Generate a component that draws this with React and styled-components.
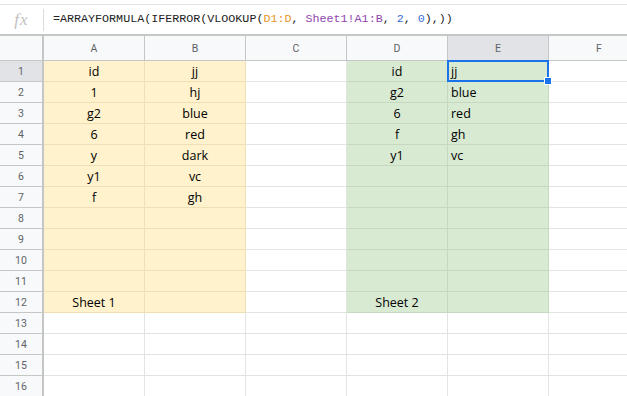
import styled, { createGlobalStyle } from "styled-components";

const GlobalStyle = createGlobalStyle`
  html, body {
    margin: 0;
    padding: 0;
    background: #fff;
    overflow: hidden;
  }
`;

const columns = ["A", "B", "C", "D", "E", "F"];

const fills = {
  yellow: { bg: "#fff2cc", line: "#efdfb5" },
  green: { bg: "#d9ead3", line: "#c6d8c0" },
  none: { bg: "#ffffff", line: "#e2e3e3" },
};

const sheet1 = [
  ["id", "jj"],
  ["1", "hj"],
  ["g2", "blue"],
  ["6", "red"],
  ["y", "dark"],
  ["y1", "vc"],
  ["f", "gh"],
];

const sheet2 = [
  ["id", "jj"],
  ["g2", "blue"],
  ["6", "red"],
  ["f", "gh"],
  ["y1", "vc"],
];

const Page = styled.div`
  width: 627px;
  height: 396px;
  overflow: hidden;
  background: #fff;
  font-family: "Open Sans", "Liberation Sans", sans-serif;
`;

const FormulaBar = styled.div`
  margin-top: 4px;
  height: 29px;
  border-top: 1px solid #e3e3e3;
  border-bottom: 2px solid #c4c7c5;
  display: flex;
  align-items: center;
`;

const FxBox = styled.div`
  width: 43px;
  height: 22px;
  border-right: 1px solid #dadce0;
  display: flex;
  align-items: center;
  justify-content: center;
  font-family: "Liberation Serif", "DejaVu Serif", serif;
  font-style: italic;
  font-size: 17px;
  color: #c2c2c2;
  letter-spacing: 1px;
`;

const Formula = styled.div`
  padding-left: 9px;
  font-family: "Liberation Mono", "DejaVu Sans Mono", monospace;
  font-size: 11.7px;
  color: #222;
  white-space: nowrap;
  padding-bottom: 2px;
`;

const Tok = styled.span`
  color: ${(p) => p.$c};
`;

const Grid = styled.div`
  display: grid;
  grid-template-columns: 44px repeat(6, 101px);
  grid-template-rows: 25px;
  grid-auto-rows: 21px;
`;

const Corner = styled.div`
  background: #f8f9fa;
  border-right: 2px solid #c4c7c5;
  border-bottom: 1px solid #c4c7c5;
`;

const ColHead = styled.div`
  background: ${(p) => (p.$active ? "#e1e3e6" : "#f8f9fa")};
  border-right: 1px solid #c4c7c5;
  border-bottom: 1px solid #c4c7c5;
  display: flex;
  align-items: center;
  justify-content: center;
  font-family: "Roboto", "Liberation Sans", sans-serif;
  font-size: 10.5px;
  color: #5f6368;
`;

const RowHead = styled.div`
  background: ${(p) => (p.$active ? "#e1e3e6" : "#f8f9fa")};
  border-right: 2px solid #c4c7c5;
  border-bottom: 1px solid #c4c7c5;
  display: flex;
  align-items: center;
  justify-content: center;
  font-family: "Roboto", "Liberation Sans", sans-serif;
  font-size: 10.5px;
  color: #5f6368;
`;

const Cell = styled.div`
  position: relative;
  background: ${(p) => fills[p.$fill].bg};
  border-right: 1px solid ${(p) => fills[p.$fill].line};
  border-bottom: 1px solid ${(p) => fills[p.$fill].line};
  display: flex;
  align-items: center;
  justify-content: ${(p) => (p.$align === "left" ? "flex-start" : "center")};
  padding: 0 3px;
  font-size: 12.5px;
  color: #000;
  white-space: nowrap;
  overflow: visible;
`;

const Selection = styled.div`
  position: absolute;
  left: -1px;
  top: -1px;
  right: -1px;
  bottom: -1px;
  border: 2px solid #1a73e8;
  pointer-events: none;
  z-index: 2;
`;

const Handle = styled.div`
  position: absolute;
  right: -5px;
  bottom: -5px;
  width: 6px;
  height: 6px;
  background: #1a73e8;
  border: 1px solid #fff;
  z-index: 3;
`;

function cellFor(row, col) {
  // row: 1-based, col: 0..5
  const inBlock = row <= 12;
  if (col <= 1 && inBlock) {
    const v = row <= 7 ? sheet1[row - 1][col] : row === 12 && col === 0 ? "Sheet 1" : "";
    return { fill: "yellow", text: v, align: "center" };
  }
  if ((col === 3 || col === 4) && inBlock) {
    const v = row <= 5 ? sheet2[row - 1][col - 3] : row === 12 && col === 3 ? "Sheet 2" : "";
    return { fill: "green", text: v, align: col === 4 ? "left" : "center" };
  }
  return { fill: "none", text: "", align: "center" };
}

export default function App() {
  const rows = Array.from({ length: 16 }, (_, i) => i + 1);
  return (
    <Page>
      <GlobalStyle />
      <FormulaBar>
        <FxBox>fx</FxBox>
        <Formula>
          =ARRAYFORMULA(IFERROR(VLOOKUP(<Tok $c="#e6951c">D1:D</Tok>,{" "}
          <Tok $c="#8e44ad">Sheet1!A1:B</Tok>, <Tok $c="#3b6fd4">2</Tok>,{" "}
          <Tok $c="#3b6fd4">0</Tok>),))
        </Formula>
      </FormulaBar>
      <Grid>
        <Corner />
        {columns.map((c) => (
          <ColHead key={c} $active={c === "E"}>
            {c}
          </ColHead>
        ))}
        {rows.map((r) => [
          <RowHead key={`h${r}`} $active={r === 1}>
            {r}
          </RowHead>,
          ...columns.map((c, ci) => {
            const cell = cellFor(r, ci);
            const selected = r === 1 && c === "E";
            return (
              <Cell key={`${c}${r}`} $fill={cell.fill} $align={cell.align}>
                {cell.text}
                {selected && (
                  <Selection>
                    <Handle />
                  </Selection>
                )}
              </Cell>
            );
          }),
        ])}
      </Grid>
    </Page>
  );
}
